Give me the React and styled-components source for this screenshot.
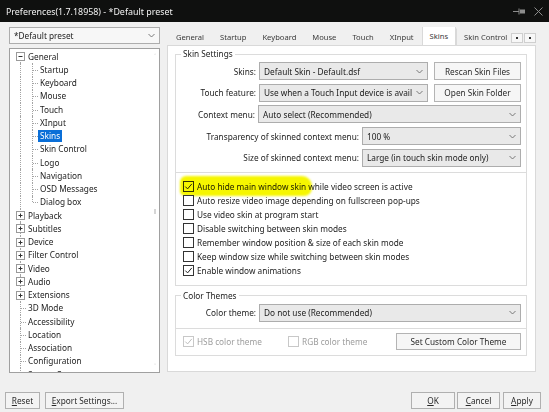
import styled, { createGlobalStyle } from "styled-components";

const GlobalStyle = createGlobalStyle`
  body {
    margin: 0;
    background: #f0f0f0;
  }
`;

const Window = styled.div`
  width: 549px;
  height: 412px;
  display: flex;
  flex-direction: column;
  background: #f0f0f0;
  font-family: "Noto Sans", "Liberation Sans", sans-serif;
  font-size: 8.25px;
  color: #1b1b1b;
  overflow: hidden;
`;

const TitleBar = styled.div`
  flex: none;
  height: 22px;
  display: flex;
  align-items: center;
  padding: 0 6px;
  background: #0f100f;
  color: #f2f2f2;
  font-size: 8.9px;
`;

const TitleText = styled.span`
  flex: 1;
`;

const TitleIcons = styled.div`
  display: flex;
  align-items: center;
  gap: 8px;
`;

const Body = styled.div`
  flex: none;
  height: 351px;
  display: flex;
  gap: 7px;
  padding: 5px 13px 0 9px;
  box-sizing: border-box;
`;

const LeftPane = styled.div`
  width: 151px;
  display: flex;
  flex-direction: column;
  gap: 4px;
`;

const Combo = styled.div`
  box-sizing: border-box;
  flex: none;
  width: ${(p) => p.$w || "auto"};
  height: ${(p) => p.$h || 18}px;
  display: flex;
  align-items: center;
  gap: 4px;
  padding: 0 4px;
  border: 1px solid #adadad;
  background: ${(p) => (p.$light ? "#f7f7f7" : "#e9e9e9")};
  color: #1b1b1b;
`;

const ComboText = styled.span`
  flex: 1;
  white-space: nowrap;
  overflow: hidden;
`;

const Chevron = () => (
  <svg width="7" height="5" viewBox="0 0 7 5">
    <path d="M0.5 1 L3.5 4 L6.5 1" fill="none" stroke="#6b6b6b" strokeWidth="0.9" />
  </svg>
);

const Tree = styled.div`
  flex: 1;
  display: flex;
  border: 1px solid #a0a0a0;
  background: #fff;
  overflow: hidden;
`;

const TreeList = styled.div`
  flex: 1;
  padding: 1px 0 0 4px;
  overflow: hidden;
`;

const TreeRow = styled.div`
  height: 13.25px;
  display: flex;
  align-items: center;
  white-space: nowrap;
`;

const TreeCell = styled.span`
  position: relative;
  flex: none;
  width: 12px;
  align-self: stretch;
  display: flex;
  align-items: center;
  justify-content: center;

  &::before {
    content: "";
    position: absolute;
    left: 6px;
    top: ${(p) => (p.$first ? "50%" : "0")};
    bottom: ${(p) => (p.$last ? "50%" : "0")};
    border-left: 1px dotted #a4a4a4;
  }

  &::after {
    content: "";
    display: ${(p) => (p.$h ? "block" : "none")};
    position: absolute;
    left: 7px;
    right: 0;
    top: 50%;
    border-top: 1px dotted #a4a4a4;
  }
`;

const Expander = styled.svg`
  position: relative;
  z-index: 1;
  margin-left: 1px;
`;

const TreeLabel = styled.span`
  height: 12px;
  line-height: 12px;
  padding: 0 2px;
  background: ${(p) => (p.$selected ? "#0a6fd8" : "transparent")};
  color: ${(p) => (p.$selected ? "#fff" : "#1b1b1b")};
`;

const ScrollTrack = styled.div`
  flex: none;
  width: 8px;
  display: flex;
  flex-direction: column;
  align-items: center;
  justify-content: space-between;
  padding: 3px 0 2px;
  color: #c4c4c4;
  font-size: 6px;
`;

const ScrollThumb = styled.span`
  width: 2px;
  height: 5px;
  background: #d6d6d6;
`;

const RightPane = styled.div`
  width: 369px;
  display: flex;
  flex-direction: column;
`;

const TabStrip = styled.div`
  flex: none;
  height: 18px;
  display: flex;
  align-items: flex-end;
`;

const TabRow = styled.div`
  flex: 1;
  height: 100%;
  display: flex;
  align-items: flex-end;
  overflow: hidden;
  padding-left: 1px;
`;

const Tab = styled.div`
  flex: none;
  box-sizing: border-box;
  height: ${(p) => (p.$active ? 20 : 17)}px;
  margin-bottom: ${(p) => (p.$active ? -1 : 0)}px;
  display: flex;
  align-items: center;
  padding: 0 ${(p) => (p.$edge ? 1 : 7)}px ${(p) => (p.$active ? 2 : 0)}px 7px;
  border: 1px solid ${(p) => (p.$active ? "#d9d9d9" : "transparent")};
  border-left-color: ${(p) => (p.$active || p.$edge ? "#d9d9d9" : "transparent")};
  border-bottom: none;
  background: ${(p) => (p.$active ? "#fff" : "transparent")};
  color: #3a3a3a;
  font-size: 7.6px;
  position: relative;
  z-index: ${(p) => (p.$active ? 1 : 0)};
  white-space: nowrap;
`;

const TabArrows = styled.div`
  flex: none;
  display: flex;
  align-self: center;
  margin-top: 3px;
`;

const TabArrow = styled.div`
  width: 12px;
  height: 10px;
  box-sizing: border-box;
  border: 1px solid #cfcfcf;
  background: #f7f7f7;
  display: flex;
  align-items: center;
  justify-content: center;
  margin-left: 1px;
`;

const Dot = styled.span`
  width: 2px;
  height: 2px;
  background: #333;
`;

const Panel = styled.div`
  flex: none;
  height: 327px;
  box-sizing: border-box;
  border: 1px solid #d9d9d9;
  background: #fff;
  padding: 2px 8px 0 7px;
  display: flex;
  flex-direction: column;
`;

const Group = styled.fieldset`
  margin: ${(p) => p.$mt || 0}px 0 0;
  padding: 0;
  border: 1px solid #dcdcdc;
  min-width: 0;
`;

const Legend = styled.legend`
  margin-left: 5px;
  padding: 0 2px;
  height: 12px;
  line-height: 12px;
  color: #1b1b1b;
`;

const FormSection = styled.div`
  display: flex;
  flex-direction: column;
  gap: 3.7px;
  padding: ${(p) => p.$pad || "2px 5px 5px 0"};
`;

const FormRow = styled.div`
  display: flex;
  align-items: center;
  justify-content: flex-end;
  gap: 3px;
  height: 18px;
`;

const Label = styled.span`
  white-space: nowrap;
`;

const Button = styled.div`
  box-sizing: border-box;
  flex: none;
  width: ${(p) => p.$w}px;
  height: ${(p) => p.$h || 18}px;
  margin-left: ${(p) => p.$ml || 0}px;
  display: flex;
  align-items: center;
  justify-content: center;
  border: 1px solid #b4b4b4;
  background: #f6f6f6;
  color: #2a2a2a;
  white-space: nowrap;
`;

const Divider = styled.div`
  height: 1px;
  background: #dcdcdc;
`;

const CheckSection = styled.div`
  padding: 7px 0 7px 7px;
  display: flex;
  flex-direction: column;
`;

const CheckRow = styled.div`
  position: relative;
  height: 14px;
  display: flex;
  align-items: center;
  gap: 3px;
  white-space: nowrap;
  width: ${(p) => (p.$w ? `${p.$w}px` : "auto")};
  color: ${(p) => (p.$disabled ? "#9d9d9d" : "#1b1b1b")};

  ${(p) =>
    p.$marked &&
    `
    &::after {
      content: "";
      position: absolute;
      left: -3px;
      top: -4px;
      width: 132px;
      height: 20px;
      background: #f6f600;
      border-radius: 6px 10px 8px 5px;
      filter: blur(1px);
      mix-blend-mode: multiply;
    }
  `}
`;

const Box = styled.span`
  flex: none;
  width: 11px;
  height: 11px;
  box-sizing: border-box;
  border: 1px solid ${(p) => (p.$disabled ? "#c8c8c8" : "#333")};
  background: #fff;
  display: flex;
  align-items: center;
  justify-content: center;
`;

const Checkbox = ({ checked, disabled }) => (
  <Box $disabled={disabled}>
    {checked && (
      <svg width="9" height="9" viewBox="0 0 9 9">
        <path
          d="M1.3 4.6 L3.6 6.9 L7.8 1.9"
          fill="none"
          stroke={disabled ? "#bdbdbd" : "#222"}
          strokeWidth="1"
        />
      </svg>
    )}
  </Box>
);

const ThemeRow = styled.div`
  display: flex;
  align-items: center;
  height: 18px;
  padding: 4px 5px 4px 7px;
`;

const Footer = styled.div`
  flex: none;
  display: flex;
  align-items: center;
  gap: 5px;
  padding: 19px 8px 0 5px;
`;

const Spacer = styled.div`
  flex: 1;
`;

const FooterButton = styled(Button)`
  height: 17px;
  background: #f3f3f3;
  border-color: #b0b0b0;
  margin-left: ${(p) => p.$ml || 0}px;
`;

const treeItems = [
  { label: "General", root: true, exp: "-", first: true },
  { label: "Startup" },
  { label: "Keyboard" },
  { label: "Mouse" },
  { label: "Touch" },
  { label: "XInput" },
  { label: "Skins", selected: true },
  { label: "Skin Control" },
  { label: "Logo" },
  { label: "Navigation" },
  { label: "OSD Messages" },
  { label: "Dialog box", last: true },
  { label: "Playback", root: true, exp: "+" },
  { label: "Subtitles", root: true, exp: "+" },
  { label: "Device", root: true, exp: "+" },
  { label: "Filter Control", root: true, exp: "+" },
  { label: "Video", root: true, exp: "+" },
  { label: "Audio", root: true, exp: "+" },
  { label: "Extensions", root: true, exp: "+" },
  { label: "3D Mode", root: true },
  { label: "Accessibility", root: true },
  { label: "Location", root: true },
  { label: "Association", root: true },
  { label: "Configuration", root: true },
  { label: "Screen Capture", root: true },
];

const tabs = ["General", "Startup", "Keyboard", "Mouse", "Touch", "XInput", "Skins", "Skin Control"];

const skinChecks = [
  { label: "Auto hide main window skin while video screen is active", checked: true, marked: true },
  { label: "Auto resize video image depending on fullscreen pop-ups" },
  { label: "Use video skin at program start" },
  { label: "Disable switching between skin modes" },
  { label: "Remember window position & size of each skin mode" },
  { label: "Keep window size while switching between skin modes" },
  { label: "Enable window animations", checked: true },
];

const ExpanderIcon = ({ type }) => (
  <Expander width="9" height="9" viewBox="0 0 9 9">
    <rect x="0.5" y="0.5" width="8" height="8" fill="#fff" stroke="#9a9a9a" />
    <path d="M2.5 4.5 H6.5" stroke="#333" />
    {type === "+" && <path d="M4.5 2.5 V6.5" stroke="#333" />}
  </Expander>
);

const TreeItem = ({ item }) => (
  <TreeRow>
    {item.root ? (
      <TreeCell $first={item.first} $h={!item.exp}>
        {item.exp && <ExpanderIcon type={item.exp} />}
      </TreeCell>
    ) : (
      <>
        <TreeCell />
        <TreeCell $last={item.last} $h />
      </>
    )}
    <TreeLabel $selected={item.selected}>{item.label}</TreeLabel>
  </TreeRow>
);

const PinIcon = () => (
  <svg width="13" height="7" viewBox="0 0 13 7">
    <path d="M0 3.5 H6" stroke="#8c8c8c" strokeWidth="1" />
    <path d="M6 0.5 V6.5" stroke="#8c8c8c" strokeWidth="1" />
    <rect x="7" y="1.5" width="5" height="4" fill="#8c8c8c" />
  </svg>
);

const CloseIcon = () => (
  <svg width="9" height="9" viewBox="0 0 9 9">
    <path d="M0.5 0.5 L8.5 8.5 M8.5 0.5 L0.5 8.5" stroke="#8c8c8c" strokeWidth="1" />
  </svg>
);

export default function App() {
  return (
    <Window>
      <GlobalStyle />
      <TitleBar>
        <TitleText>Preferences(1.7.18958) - *Default preset</TitleText>
        <TitleIcons>
          <PinIcon />
          <CloseIcon />
        </TitleIcons>
      </TitleBar>

      <Body>
        <LeftPane>
          <Combo $h={17} $light>
            <ComboText>*Default preset</ComboText>
            <Chevron />
          </Combo>
          <Tree>
            <TreeList>
              {treeItems.map((item) => (
                <TreeItem key={item.label} item={item} />
              ))}
            </TreeList>
            <ScrollTrack>
              <span>˄</span>
              <ScrollThumb />
              <span>˅</span>
            </ScrollTrack>
          </Tree>
        </LeftPane>

        <RightPane>
          <TabStrip>
            <TabRow>
              {tabs.map((t) => (
                <Tab key={t} $active={t === "Skins"} $edge={t === "Skin Control"}>
                  {t}
                </Tab>
              ))}
            </TabRow>
            <TabArrows>
              <TabArrow>
                <Dot />
              </TabArrow>
              <TabArrow>
                <Dot />
              </TabArrow>
            </TabArrows>
          </TabStrip>

          <Panel>
            <Group>
              <Legend>Skin Settings</Legend>
              <FormSection>
                <FormRow>
                  <Label>Skins:</Label>
                  <Combo $w="169px">
                    <ComboText>Default Skin - Default.dsf</ComboText>
                    <Chevron />
                  </Combo>
                  <Button $w={87} $ml={3}>Rescan Skin Files</Button>
                </FormRow>
                <FormRow>
                  <Label>Touch feature:</Label>
                  <Combo $w="169px">
                    <ComboText>Use when a Touch Input device is availa</ComboText>
                    <Chevron />
                  </Combo>
                  <Button $w={87} $ml={3}>Open Skin Folder</Button>
                </FormRow>
                <FormRow>
                  <Label>Context menu:</Label>
                  <Combo $w="263px">
                    <ComboText>Auto select (Recommended)</ComboText>
                    <Chevron />
                  </Combo>
                </FormRow>
                <FormRow>
                  <Label>Transparency of skinned context menu:</Label>
                  <Combo $w="159px">
                    <ComboText>100 %</ComboText>
                    <Chevron />
                  </Combo>
                </FormRow>
                <FormRow>
                  <Label>Size of skinned context menu:</Label>
                  <Combo $w="159px">
                    <ComboText>Large (in touch skin mode only)</ComboText>
                    <Chevron />
                  </Combo>
                </FormRow>
              </FormSection>
              <Divider />
              <CheckSection>
                {skinChecks.map((c) => (
                  <CheckRow key={c.label} $marked={c.marked}>
                    <Checkbox checked={c.checked} />
                    <span>{c.label}</span>
                  </CheckRow>
                ))}
              </CheckSection>
            </Group>

            <Group $mt={4}>
              <Legend>Color Themes</Legend>
              <FormSection $pad="2px 5px 6px 0">
                <FormRow>
                  <Label>Color theme:</Label>
                  <Combo $w="262px">
                    <ComboText>Do not use (Recommended)</ComboText>
                    <Chevron />
                  </Combo>
                </FormRow>
              </FormSection>
              <Divider />
              <ThemeRow>
                <CheckRow $w={105} $disabled>
                  <Checkbox checked disabled />
                  <span>HSB color theme</span>
                </CheckRow>
                <CheckRow $disabled>
                  <Checkbox disabled />
                  <span>RGB color theme</span>
                </CheckRow>
                <Spacer />
                <Button $w={125} $h={17}>Set Custom Color Theme</Button>
              </ThemeRow>
            </Group>
          </Panel>
        </RightPane>
      </Body>

      <Footer>
        <FooterButton $w={35}>
          <span><u>R</u>eset</span>
        </FooterButton>
        <FooterButton $w={79}>
          <span><u>E</u>xport Settings...</span>
        </FooterButton>
        <Spacer />
        <FooterButton $w={44}>
          <span><u>O</u>K</span>
        </FooterButton>
        <FooterButton $w={43} $ml={-3}>
          <span><u>C</u>ancel</span>
        </FooterButton>
        <FooterButton $w={38} $ml={-2}>
          <span><u>A</u>pply</span>
        </FooterButton>
      </Footer>
    </Window>
  );
}
